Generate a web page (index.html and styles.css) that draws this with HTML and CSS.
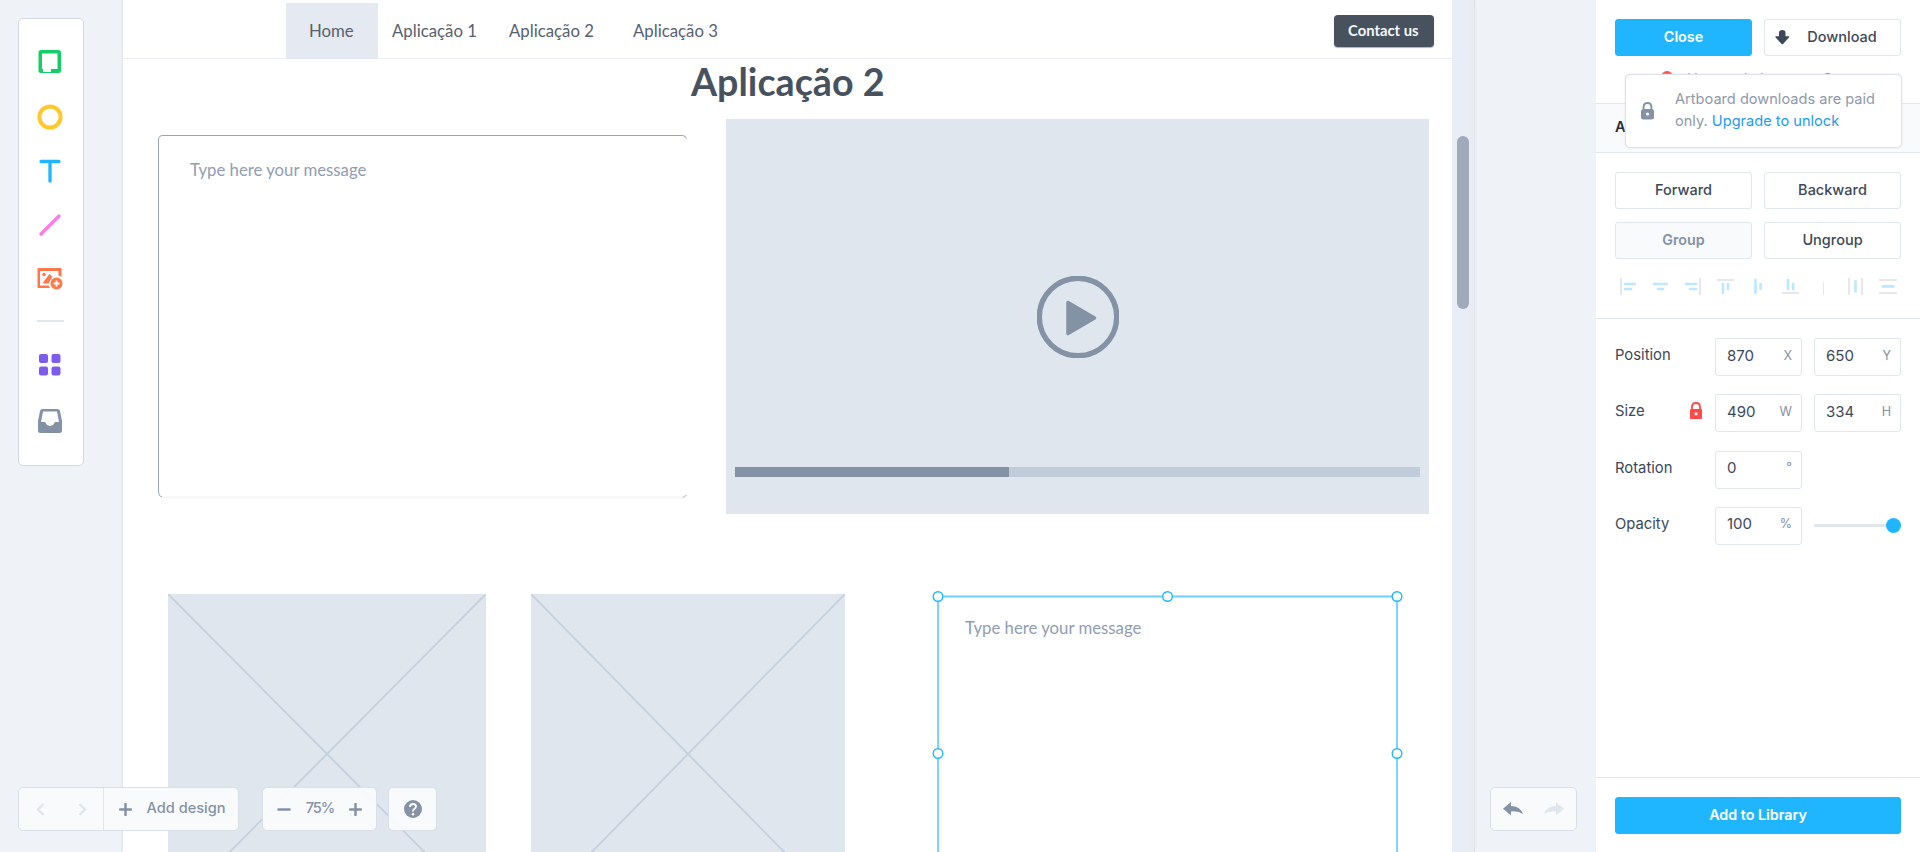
FILE: index.html
```
<!DOCTYPE html>
<html lang="en">
<head>
<meta charset="utf-8">
<title>Design editor</title>
<link rel="stylesheet" href="styles.css">
</head>
<body>
<div class="app">
  <main class="workspace">
    <div class="artboard">
      <nav class="site-nav">
        <span class="nav-item nav-home"><span class="narrow">Home</span></span>
        <span class="nav-item nav-one"><span class="narrow">Aplicação 1</span></span>
        <span class="nav-item nav-two"><span class="narrow">Aplicação 2</span></span>
        <span class="nav-item nav-three"><span class="narrow">Aplicação 3</span></span>
        <span class="contact"><span class="narrow">Contact us</span></span>
      </nav>
      <h1 class="title">Aplicação 2</h1>
      <svg class="message-frame" width="531" height="366" viewBox="0 0 531 366" fill="none">
        <path d="M3 362.500H527" stroke="#f5f6f9" stroke-width="2"/>
        <path d="M528.500 3.500Q528 .5 524 .5H5Q.5 .5 .5 5V357Q.5 361.500 4 362" stroke="#98a5b5"/>
        <path d="M525 362.500L528.500 360" stroke="#c3cad5" stroke-width="1.500"/>
      </svg>
      <p class="message message-one">Type here your message</p>
      <div class="video">
        <svg class="play" width="82" height="82" viewBox="0 0 82 82">
          <circle cx="41" cy="41" r="38.700" fill="none" stroke="#8492a6" stroke-width="5.400"/>
          <path d="M31 26.500L57.500 42L31 57.500Z" fill="#8492a6" stroke="#8492a6" stroke-width="3.500" stroke-linejoin="round"/>
        </svg>
        <div class="progress"><div class="progress-fill"></div></div>
      </div>
      <svg class="picture picture-one" viewBox="0 0 318 320" preserveAspectRatio="none" stroke="#c5d0dd" stroke-width="1.800"><path d="M0 0L318 320M318 0L0 320"/></svg>
      <svg class="picture picture-two" viewBox="0 0 314 320" preserveAspectRatio="none" stroke="#c5d0dd" stroke-width="1.800"><path d="M0 0L314 320M314 0L0 320"/></svg>
      <p class="message message-two">Type here your message</p>
      <svg class="selection" width="472" height="262" viewBox="-.5 0 472 262" fill="#fff" stroke="#20b6ff" stroke-width="1.400">
        <path d="M6.500 262V6.500H465.500V262" fill="none" stroke="#6fcfff" stroke-width="1.800"/>
        <circle cx="6.500" cy="6.500" r="4.800"/><circle cx="236" cy="6.500" r="4.800"/><circle cx="465.500" cy="6.500" r="4.800"/>
        <circle cx="6.500" cy="163.500" r="4.800"/><circle cx="465.500" cy="163.500" r="4.800"/>
      </svg>
      <div class="scroll-track"><div class="scroll-thumb"></div></div>
    </div>

    <div class="tools">
      <svg class="tool tool-rect" width="24" height="24" viewBox="0 .5 24 24"><path fill-rule="evenodd" fill="#13ce66" d="M3 .5H20.500Q23 .5 23 3V21Q23 23.500 20.500 23.500H3Q.5 23.500 .5 21V3Q.5 .5 3 .5ZM4 4V19.500H5V22.500H13V19.500H19.500V4Z"/></svg>
      <svg class="tool tool-circle" width="26" height="26" viewBox="0 0 26 26"><circle cx="13" cy="13" r="10.600" fill="none" stroke="#ffc82c" stroke-width="4"/></svg>
      <svg class="tool tool-text" width="24" height="24" viewBox="0 0 24 24"><path d="M3 2.500H21M12 2.500V22" fill="none" stroke="#1fb6ff" stroke-width="3.300" stroke-linecap="round"/></svg>
      <svg class="tool tool-line" width="24" height="24" viewBox="0 0 24 24"><path d="M3 21L21 3" stroke="#ff7ce5" stroke-width="3.400" stroke-linecap="round"/></svg>
      <svg class="tool tool-image" width="26" height="22" viewBox="0 0 26 22" fill="#ff7849"><path fill-rule="evenodd" d="M1.500 0H23.500Q24.500 0 24.500 1V9Q22.500 7.800 21.500 7.800V3H3V17.500H11.500L13 20H1.500Q.5 20 .5 19V1Q.5 0 1.500 0Z"/><circle cx="7" cy="6.500" r="1.800"/><path d="M5.500 15.500L8.500 11L12.500 6L15.500 8.500L11.500 15.500Z"/><circle cx="19.500" cy="15.500" r="6.900" fill="#fff"/><circle cx="19.500" cy="15.500" r="6"/><path d="M19.500 12.500V18.500M16.500 15.500H22.500" stroke="#fff" stroke-width="1.800"/></svg>
      <div class="tool-separator"></div>
      <svg class="tool tool-grid" width="22" height="22" viewBox="0 0 22 22" fill="#7e5bef"><rect width="9" height="9" rx="2"/><rect x="12.500" width="9" height="9" rx="2"/><rect y="12.500" width="9" height="9" rx="2"/><rect x="12.500" y="12.500" width="9" height="9" rx="2"/></svg>
      <svg class="tool tool-tray" width="24" height="24" viewBox="0 0 24 24"><path fill-rule="evenodd" fill="#8492a6" d="M4.500 0H19.500Q21.500 0 22 2L24 12V21.500Q24 24 21.500 24H2.500Q0 24 0 21.500V12L2 2Q2.500 0 4.500 0ZM5 2.500L3 13H7L9 16L12 17L15 16L17 13H21L19 2.500Z"/></svg>
    </div>

    <div class="bottom-controls">
      <div class="panel pages">
        <div class="page-arrows">
          <svg width="9" height="13" viewBox="0 0 9 13"><path d="M7.500 1L2 6.500L7.500 12" fill="none" stroke="#e0e6ed" stroke-width="2.400"/></svg>
          <svg width="9" height="13" viewBox="0 0 9 13"><path d="M1.500 1L7 6.500L1.500 12" fill="none" stroke="#e0e6ed" stroke-width="2.400"/></svg>
        </div>
        <div class="add-design">
          <svg width="13" height="13" viewBox="0 0 13 13"><path d="M6.500 1V12M1 6.500H12" stroke="#8492a6" stroke-width="2.500" stroke-linecap="round"/></svg>
          <span>Add design</span>
        </div>
      </div>
      <div class="panel zoom">
        <svg width="14" height="13" viewBox="0 0 14 13"><path d="M1.500 6.500H12.500" stroke="#8492a6" stroke-width="2.500" stroke-linecap="round"/></svg>
        <span>75%</span>
        <svg width="13" height="13" viewBox="0 0 13 13"><path d="M6.500 1V12M1 6.500H12" stroke="#8492a6" stroke-width="2.500" stroke-linecap="round"/></svg>
      </div>
      <div class="panel help">
        <svg width="18" height="18" viewBox="0 0 18 18"><circle cx="9" cy="9" r="9" fill="#8492a6"/><path d="M6 7Q6 4 9 4Q12 4 12 6.600Q12 8 10.300 9Q9 9.800 9 11.500" fill="none" stroke="#fff" stroke-width="1.900"/><circle cx="9" cy="14.200" r="1.250" fill="#fff"/></svg>
      </div>
    </div>

    <div class="panel history">
      <svg width="20" height="14" viewBox="0 0 20 14"><path fill="#8492a6" d="M8 0V4Q17 4 20 12Q15 8.500 8 9.500V13.500L0 6.800Z"/></svg>
      <svg width="20" height="14" viewBox="0 0 20 14"><path fill="#e0e6ed" d="M12 0V4Q3 4 0 12Q5 8.500 12 9.500V13.500L20 6.800Z"/></svg>
    </div>
  </main>

  <aside class="sidebar">
    <section class="top-section">
      <div class="row">
        <button class="btn btn-primary">Close</button>
        <button class="btn btn-download">
          <svg width="15" height="15" viewBox="0 0 15 15"><path fill="#3c4858" d="M4 2.500Q4 0 7.300 0Q10.500 0 10.500 2.500V6.300H13.700Q14.800 6.500 14 7.500L8 14Q7.300 14.700 6.600 14L.6 7.500Q-.2 6.500 1 6.300H4Z"/></svg>
          <span>Download</span>
        </button>
      </div>
      <div class="status"><i class="status-dot"></i><span>Unsaved changes.</span><a>Save</a></div>
    </section>
    <h2 class="section-title">A</h2>
    <section class="arrange">
      <div class="row"><button class="btn">Forward</button><button class="btn">Backward</button></div>
      <div class="row"><button class="btn btn-disabled">Group</button><button class="btn">Ungroup</button></div>
      <svg class="align-icons" width="286" height="18" viewBox="0 0 286 18">
        <g fill="#e5e7ed"><rect x="5" width="2" height="17"/><rect x="84" width="2" height="17"/><rect x="102" y="1" width="17" height="2"/><rect x="167" y="14" width="17" height="2"/><rect x="208" y="4" width="1" height="13"/><rect x="233" width="2" height="17"/><rect x="246" width="2" height="17"/><rect x="264" y="1" width="18" height="2"/><rect x="264" y="14" width="18" height="2"/></g>
        <g fill="#b9e8ff">
          <rect x="8.700" y="4.700" width="12.300" height="2.600" rx="1"/><rect x="8.700" y="9.700" width="8.600" height="2.600" rx="1"/>
          <rect x="37.700" y="4.700" width="15.300" height="2.600" rx="1"/><rect x="41.700" y="9.700" width="7.600" height="2.600" rx="1"/>
          <rect x="69.700" y="4.700" width="12.600" height="2.600" rx="1"/><rect x="73.700" y="9.700" width="8.600" height="2.600" rx="1"/>
          <rect x="106.700" y="4.700" width="2.600" height="11.300" rx="1"/><rect x="111.700" y="4.700" width="2.600" height="7.600" rx="1"/>
          <rect x="139.200" y=".7" width="2.600" height="15.300" rx="1"/><rect x="144.300" y="4.700" width="2.600" height="7.600" rx="1"/>
          <rect x="171.700" y=".7" width="2.600" height="11.600" rx="1"/><rect x="176.800" y="4.700" width="2.600" height="7.600" rx="1"/>
          <rect x="239.200" y="2" width="2.600" height="12.700" rx="1"/><rect x="266.700" y="7" width="13" height="2.700" rx="1"/>
        </g>
      </svg>
    </section>
    <section class="props">
      <div class="prop"><label>Position</label><div class="field"><b>870</b><i>X</i></div><div class="field"><b>650</b><i>Y</i></div></div>
      <div class="prop"><label>Size</label>
        <svg class="size-lock" width="12" height="17" viewBox="0 0 12 17"><path d="M2 8V5Q2 1 6 1Q10 1 10 5V8" fill="none" stroke="#ff4949" stroke-width="1.800"/><path fill-rule="evenodd" fill="#ff4949" d="M1 7H11Q12 7 12 8V16Q12 17 11 17H1Q0 17 0 16V8Q0 7 1 7ZM4.700 10.500V13.200H7.400V10.500Z"/></svg>
        <div class="field"><b>490</b><i>W</i></div><div class="field"><b>334</b><i>H</i></div></div>
      <div class="prop"><label>Rotation</label><div class="field"><b>0</b><i>°</i></div></div>
      <div class="prop"><label>Opacity</label><div class="field"><b>100</b><i>%</i></div><div class="slider"><i class="knob"></i></div></div>
    </section>
    <footer class="library"><button class="btn btn-primary">Add to Library</button></footer>
    <div class="tooltip">
      <svg width="13" height="18" viewBox="0 0 13 18"><path d="M2.600 8V5Q2.600 1 6.500 1Q10.400 1 10.400 5V8" fill="none" stroke="#8492a6" stroke-width="1.900"/><rect y="7" width="13" height="10.500" rx="2.500" fill="#8492a6"/><circle cx="6.500" cy="12" r="1.600" fill="#fff"/></svg>
      <p>Artboard downloads are paid<br>only. <a>Upgrade to unlock</a></p>
    </div>
  </aside>
</div>
</body>
</html>
```
FILE: styles.css
```
* { box-sizing: border-box; }
body { margin: 0; font: 14.6px/22px Inter, "Liberation Sans", sans-serif; color: #3c4858; }
p, h1, h2 { margin: 0; }
svg { display: block; flex: none; }
a { color: #1a9cee; }

.app { display: flex; width: 1920px; height: 852px; overflow: hidden; }
.workspace { position: relative; flex: 1; overflow: hidden; background: #eff2f7; }

/* Artboard: a free canvas, its origin at the workspace's 122px */
.artboard { position: absolute; left: 122px; top: 0; width: 1353px; height: 852px; overflow: hidden; background: #fff; border-left: 1px solid #e4e7ee; border-right: 1px solid #e2e5ec; box-shadow: 0 0 2px #e0e5ec; }
.artboard > * { position: absolute; }
.site-nav { left: 0; top: 0; width: 1329px; height: 59px; border-bottom: 1px solid #e9ecf5; font: 18px/22px Lato, sans-serif; color: #56616f; }
.site-nav > * { position: absolute; white-space: nowrap; }
.narrow { display: inline-block; transform: scaleX(.932); transform-origin: 0 50%; }
.nav-item { top: 19px; }
.nav-home { left: 163px; top: 3px; width: 92px; height: 56px; padding: 16px 0 0 22.5px; background: #e5e9f2; }
.nav-one { left: 268.500px; }
.nav-two { left: 386px; }
.nav-three { left: 510px; }
.contact { left: 1210.500px; top: 15px; width: 100px; height: 32px; padding-left: 14px; border-radius: 4px; background: #47525e; box-shadow: 0 1px 1px #aab3c0; color: #f5f7fa; font-size: 15.600px; font-weight: 700; line-height: 31px; }
.contact .narrow { transform: scaleX(.95); }
.title { left: 568px; top: 57px; font: 700 39px/48px Lato, sans-serif; color: #47525e; white-space: nowrap; transform: scaleX(.965); transform-origin: 0 50%; }
.message-frame { left: 35px; top: 135px; }
.message { font: 18px/22px Lato, sans-serif; color: #8f9db3; white-space: nowrap; transform: scaleX(.93); transform-origin: 0 50%; }
.message-one { left: 67px; top: 158px; }
.message-two { left: 842px; top: 616px; }
.video { left: 603px; top: 119px; width: 703px; height: 394.500px; background: #dfe6ee; }
.play { position: absolute; left: 311px; top: 157px; }
.progress { position: absolute; left: 9px; top: 348px; width: 685px; height: 10px; background: #c0ccda; }
.progress-fill { width: 274px; height: 10px; background: #8492a6; }
.picture { top: 594px; height: 320px; background: #dfe6ee; }
.picture-one { left: 45px; width: 318px; }
.picture-two { left: 408px; width: 314px; }
.selection { left: 808px; top: 590px; }
.scroll-track { left: 1329px; top: 0; width: 22px; height: 852px; background: linear-gradient(90deg, #e9edf7 70%, #eaecf1 85%, #e9ecf2); }
.scroll-thumb { margin: 135.500px 0 0 5px; width: 12px; height: 173px; border-radius: 6px; background: #9fabbb; }

.tools { position: absolute; left: 18px; top: 18px; width: 66px; height: 448px; padding-top: 31px; display: flex; flex-direction: column; align-items: center; background: #fff; border: 1px solid #d3d8e4; border-radius: 5px; }
.tool { margin-left: -2px; }
.tool-circle { margin-top: 29.500px; }
.tool-text { margin-top: 29.500px; }
.tool-line { margin-top: 30px; }
.tool-image { margin-top: 31px; }
.tool-separator { width: 27px; height: 2px; margin-top: 30px; margin-left: -1px; background: #e0e6ed; }
.tool-grid { margin-top: 32px; }
.tool-tray { margin-top: 33px; }

.panel { display: flex; align-items: center; height: 44px; background: rgba(249, 250, 252, .97); border: 1px solid #d8dfe9; border-radius: 5px; }
.bottom-controls { position: absolute; left: 18px; top: 787px; display: flex; font-weight: 500; color: #8492a6; }
.bottom-controls span { padding-bottom: 2px; }
.pages { width: 221px; }
.page-arrows { display: flex; justify-content: space-between; align-items: center; width: 85px; height: 42px; padding: 0 16px 0 17px; border-right: 1px solid #e0e6ed; }
.add-design { display: flex; align-items: center; gap: 15px; padding-left: 14.500px; font-size: 14.600px; }
.zoom { width: 115px; margin-left: 23px; padding: 0 14px; justify-content: space-between; letter-spacing: -1px; }
.help { width: 49px; margin-left: 11px; justify-content: center; }
.history { position: absolute; left: 1490px; top: 787px; width: 87px; padding: 0 12px; justify-content: space-between; background: #f9fafc; }

.sidebar { position: relative; width: 324px; display: flex; flex-direction: column; background: #fff; }
.row { display: grid; grid-template-columns: 1fr 1fr; gap: 12px; }
.btn { width: 100%; display: flex; align-items: center; justify-content: center; height: 37px; padding: 0 0 2px; border: 1px solid #e0e6ed; border-radius: 3px; background: #fff; font: 500 14.500px/20px Inter, "Liberation Sans", sans-serif; color: #3c4858; }
.btn-primary { background: #20b6ff; border-color: #20b6ff; color: #fff; font-weight: 600; font-size: 14.300px; }
.btn-disabled { background: #f9fafc; color: #8492a6; font-weight: 600; font-size: 14.300px; }
.btn-download { gap: 17px; padding-right: 13px; }
.btn-download svg { margin-top: 2px; }
.top-section { height: 103px; padding: 19px 19px 0; }
.status { display: flex; align-items: center; height: 22px; margin-top: 12px; padding-left: 46px; color: #8492a6; font-size: 14.600px; }
.status-dot { width: 12px; height: 12px; margin-top: -4px; margin-right: 14px; border-radius: 50%; background: #ff4949; }
.status a { margin-left: 8px; }
.section-title { height: 50px; padding: 11px 19px; border: solid #e0e6ed; border-width: 1px 0; background: #f9fafc; color: #1f2d3d; font-size: 14.600px; font-weight: 600; line-height: 24px; }
.arrange { display: flex; flex-direction: column; gap: 13px; height: 166px; padding: 19px 19px 0; border-bottom: 1px solid #e0e6ed; }
.align-icons { margin-top: 6px; }
.props { flex: 1; display: flex; flex-direction: column; gap: 18.300px; padding: 19px 19px 0; }
.prop { display: flex; align-items: center; height: 38px; }
.prop label { width: 100px; padding-bottom: 4px; font-size: 14.800px; }
.prop .size-lock { margin: -5px 13px 0 -25px; }
.field { display: flex; justify-content: space-between; align-items: center; width: 87px; height: 38px; margin-right: 12px; padding: 0 9px 3px 11px; border: 1px solid #e0e6ed; border-radius: 3px; }
.field b { font-weight: 400; font-size: 15px; }
.field i { font-style: normal; font-size: 12.600px; color: #8492a6; }
.slider { position: relative; width: 87px; height: 3px; background: #e0e6ed; }
.prop .field:last-child, .prop .slider:last-child { margin-right: 0; }
.knob { position: absolute; right: 0; top: -6px; width: 15px; height: 15px; border-radius: 50%; background: #20b6ff; }
.library { display: flex; height: 75px; padding: 19px 19px 0; border-top: 1px solid #e0e6ed; }
.tooltip { position: absolute; left: 29px; top: 74px; width: 277px; height: 74px; display: flex; gap: 21px; padding: 13px 0 0 15px; background: #fff; border: 1px solid #dfe3e9; border-radius: 5px; box-shadow: 0 0 2px #dde1e8; color: #8e99a9; font-size: 14.600px; }
.tooltip svg { margin-top: 14px; }
.tooltip p { white-space: nowrap; }
```
